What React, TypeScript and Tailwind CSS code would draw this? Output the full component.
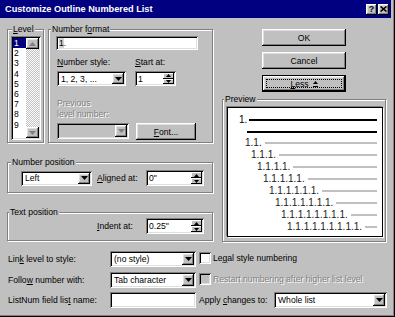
import type { ReactNode } from 'react'

const raised =
  'bg-[#c0c0c0] shadow-[inset_-1px_-1px_0_#000,inset_1px_1px_0_#fff,inset_-2px_-2px_0_#808080,inset_2px_2px_0_#dfdfdf]'
const raisedThin = 'bg-[#c0c0c0] shadow-[inset_-1px_-1px_0_#000,inset_1px_1px_0_#fff]'
const sunken =
  'shadow-[inset_1px_1px_0_#808080,inset_-1px_-1px_0_#fff,inset_2px_2px_0_#000,inset_-2px_-2px_0_#dfdfdf]'
const dim = 'text-[#808080] [text-shadow:1px_1px_0_#fff]'

function Down({ color = '#000' }: { color?: string }) {
  return (
    <svg width="7" height="4">
      <polygon points="0,0 7,0 3.5,4" fill={color} />
    </svg>
  )
}

function Up({ color = '#000' }: { color?: string }) {
  return (
    <svg width="7" height="4">
      <polygon points="0,4 7,4 3.5,0" fill={color} />
    </svg>
  )
}

function Group({ label, ml, className, children }: { label: ReactNode; ml: string; className: string; children?: ReactNode }) {
  return (
    <fieldset className={`border border-[#808080] shadow-[inset_1px_1px_0_#fff,1px_1px_0_#fff] ${className}`}>
      <legend className={`${ml} px-[1px] leading-[10px] bg-[#c0c0c0]`}>{label}</legend>
      {children}
    </fieldset>
  )
}

function Select({ value = '', className = '', disabled = false }: { value?: string; className?: string; disabled?: boolean }) {
  return (
    <div className={`flex p-[2px] ${sunken} ${disabled ? 'bg-[#c0c0c0]' : 'bg-white'} ${className}`}>
      <span className="flex-1 pl-[2px] flex items-center overflow-hidden whitespace-nowrap">{value}</span>
      <span className={`w-[12px] flex items-center justify-center ${raised}`}>
        <Down color={disabled ? '#808080' : '#000'} />
      </span>
    </div>
  )
}

function Spin({ value, className = '' }: { value: string; className?: string }) {
  return (
    <div className={`flex p-[2px] bg-white ${sunken} ${className}`}>
      <span className="flex-1 pl-[1px] flex items-center">{value}</span>
      <span className="w-[11px] flex flex-col">
        <span className={`flex-1 flex items-center justify-center ${raisedThin}`}>
          <svg width="5" height="3"><polygon points="0,3 5,3 2.5,0" fill="#000" /></svg>
        </span>
        <span className={`flex-1 flex items-center justify-center ${raisedThin}`}>
          <svg width="5" height="3"><polygon points="0,0 5,0 2.5,3" fill="#000" /></svg>
        </span>
      </span>
    </div>
  )
}

function Button({ children, className = '' }: { children: ReactNode; className?: string }) {
  return <div className={`ml-[40px] w-[84px] h-[17px] flex items-center justify-center ${raised} ${className}`}>{children}</div>
}

function Check({ disabled = false }: { disabled?: boolean }) {
  return <span className={`w-[12px] h-[12px] ${sunken} ${disabled ? 'bg-[#c0c0c0]' : 'bg-white'}`} />
}

const levels = ['1', '2', '3', '4', '5', '6', '7', '8', '9']
const preview = [17, 23, 29, 35, 41, 47, 53, 59]

export default function App() {
  return (
    <div className="w-[395px] h-[317px] bg-[#c0c0c0] flex flex-col text-[8.6px] leading-[10px] text-black font-['Liberation_Sans',Arial,sans-serif] shadow-[inset_-1px_-1px_0_#000,inset_-2px_-2px_0_#808080]">
      {/* title bar */}
      <div className="w-[391px] h-[18px] shrink-0 bg-[#000080] flex items-center pl-[5px] pr-[2px]">
        <span className="flex-1 text-white font-bold text-[9.2px]">Customize Outline Numbered List</span>
        <span className={`w-[11px] h-[11px] ${raised} flex items-center justify-center font-bold text-[9px] leading-none`}>?</span>
        <span className={`ml-[1px] w-[11px] h-[11px] ${raised} flex items-center justify-center`}>
          <svg width="7" height="6">
            <path d="M0.5 0.5L6.5 5.5M6.5 0.5L0.5 5.5" stroke="#000" strokeWidth="1.6" />
          </svg>
        </span>
      </div>

      <div className="flex pl-[7px] pt-[6px]">
        {/* left column */}
        <div className="w-[206px] flex flex-col">
          <div className="flex h-[119px]">
            <Group label={<><u>L</u>evel</>} ml="ml-[4px]" className="w-[37px] h-full">
              <div className={`ml-[3px] mt-[2px] w-[30px] h-[104px] bg-white p-[2px] flex ${sunken}`}>
                <div className="flex-1 flex flex-col">
                  {levels.map((n) => (
                    <div
                      key={n}
                      className={`h-[10.2px] leading-[10.2px] pl-[1px] ${n === '1' ? 'bg-[#000080] text-white' : ''}`}
                    >
                      {n}
                    </div>
                  ))}
                </div>
                <div className="w-[13px] flex flex-col">
                  <div className={`h-[11px] ${raised} flex items-center justify-center`}>
                    <Up color="#808080" />
                  </div>
                  <div className="flex-1 bg-[image:repeating-conic-gradient(#fff_0_25%,#c0c0c0_0_50%)] bg-[length:2px_2px]" />
                  <div className={`h-[11px] ${raised} flex items-center justify-center`}>
                    <Down color="#808080" />
                  </div>
                </div>
              </div>
            </Group>

            <Group label={<>Number f<u>o</u>rmat</>} ml="ml-[2px]" className="ml-[4px] w-[165px] h-full">
              <div className={`ml-[7px] mt-[2px] w-[142px] h-[14px] bg-white p-[2px] pl-[3px] flex items-center ${sunken}`}>
                <span className="bg-[#d4d4d4]">1</span>.
              </div>
              <div className="flex mt-[7px] ml-[8px]">
                <div className="w-[78px]">
                  <div><u>N</u>umber style:</div>
                  <Select value="1, 2, 3, ..." className="mt-[4px] w-[69px] h-[15px]" />
                </div>
                <div>
                  <div><u>S</u>tart at:</div>
                  <Spin value="1" className="mt-[4px] w-[41px] h-[15px]" />
                </div>
              </div>
              <div className={`mt-[12px] ml-[8px] leading-[11px] ${dim}`}>
                <div>Previous</div>
                <div>level number:</div>
              </div>
              <div className="flex mt-[3px] ml-[8px]">
                <Select disabled className="w-[72px] h-[16px]" />
                <div className={`ml-[7px] w-[60px] h-[17px] flex items-center justify-center ${raised}`}>
                  <span><u>F</u>ont...</span>
                </div>
              </div>
            </Group>
          </div>

          <Group label="Number position" ml="ml-[3px]" className="mt-[14px] h-[36px]">
            <div className="flex items-center mt-[3px] ml-[13px] h-[16px]">
              <Select value="Left" className="w-[71px] h-[15px]" />
              <span className="ml-[5px] w-[49px]"><u>A</u>ligned at:</span>
              <Spin value={'0"'} className="w-[58px] h-[16px]" />
            </div>
          </Group>

          <Group label="Text position" ml="ml-[1px]" className="mt-[14px] h-[34px]">
            <div className="flex items-center mt-[1px] ml-[89px] h-[16px]">
              <span className="w-[49px]"><u>I</u>ndent at:</span>
              <Spin value={'0.25"'} className="w-[58px] h-[16px]" />
            </div>
          </Group>
        </div>

        {/* right column */}
        <div className="ml-[9px] w-[164px] flex flex-col">
          <Button className="mt-[5px]">OK</Button>
          <Button className="mt-[6px]">Cancel</Button>
          <div className="mt-[6px] ml-[40px] w-[84px] h-[17px] border border-black">
            <div className={`w-full h-full p-[3px] ${raised}`}>
              <div className="w-full h-full border border-dotted border-black flex items-center justify-center gap-[4px]">
                <span><u>L</u>ess</span>
                <svg width="5" height="6">
                  <polygon points="0,3 5,3 2.5,0" fill="#000" />
                  <rect x="0" y="5" width="5" height="1" fill="#000" />
                </svg>
              </div>
            </div>
          </div>

          <Group label="Preview" ml="ml-[1px]" className="mt-[2px] h-[148px] w-full">
            <div className="ml-[4px] mt-[3px] w-[156px] h-[130px] bg-white border border-black shadow-[-1px_-1px_0_#808080,1px_1px_0_#fff] flex flex-col text-[10px] leading-[12px] pr-[5px]">
              <div className="mt-[6px] flex items-center pl-[11px]">
                <span>1.</span>
                <span className="ml-[2px] flex-1 h-[2px] bg-black" />
              </div>
              <div className="mt-[5px] ml-[19px] h-[2px] bg-black" />
              <div className="mt-[4px] flex flex-col">
                {preview.map((ml, i) => (
                  <div key={ml} className="h-[12px] flex items-center" style={{ paddingLeft: ml }}>
                    <span className="text-[#202020]">{'1.'.repeat(i + 2)}</span>
                    <span className="ml-[3px] flex-1 h-[2px] bg-[#c0c0c0]" />
                  </div>
                ))}
              </div>
            </div>
          </Group>
        </div>
      </div>

      {/* bottom rows */}
      <div className="mt-[9px] pl-[8px] flex flex-col">
        <div className="flex h-[16px] items-center">
          <span className="w-[102px]">Lin<u>k</u> level to style:</span>
          <Select value="(no style)" className="w-[86px] h-[16px]" />
          <div className="self-start mt-[1px] ml-[3px] flex items-center h-[12px]">
            <Check />
            <span className="ml-[2px]">Le<u>g</u>al style numbering</span>
          </div>
        </div>
        <div className="mt-[5px] flex h-[16px] items-center">
          <span className="w-[102px]">Follo<u>w</u> number with:</span>
          <Select value="Tab character" className="w-[86px] h-[16px]" />
          <div className="self-start mt-[1px] ml-[3px] flex items-center h-[12px]">
            <Check disabled />
            <span className={`ml-[2px] ${dim}`}>Restart numbering after higher list level</span>
          </div>
        </div>
        <div className="mt-[4px] flex h-[16px] items-center">
          <span className="w-[102px]">ListNum field lis<u>t</u> name:</span>
          <div className={`w-[86px] h-[16px] bg-white ${sunken}`} />
          <span className="ml-[3px] w-[75px]">Apply <u>c</u>hanges to:</span>
          <Select value="Whole list" className="w-[113px] h-[16px]" />
        </div>
      </div>
    </div>
  )
}
